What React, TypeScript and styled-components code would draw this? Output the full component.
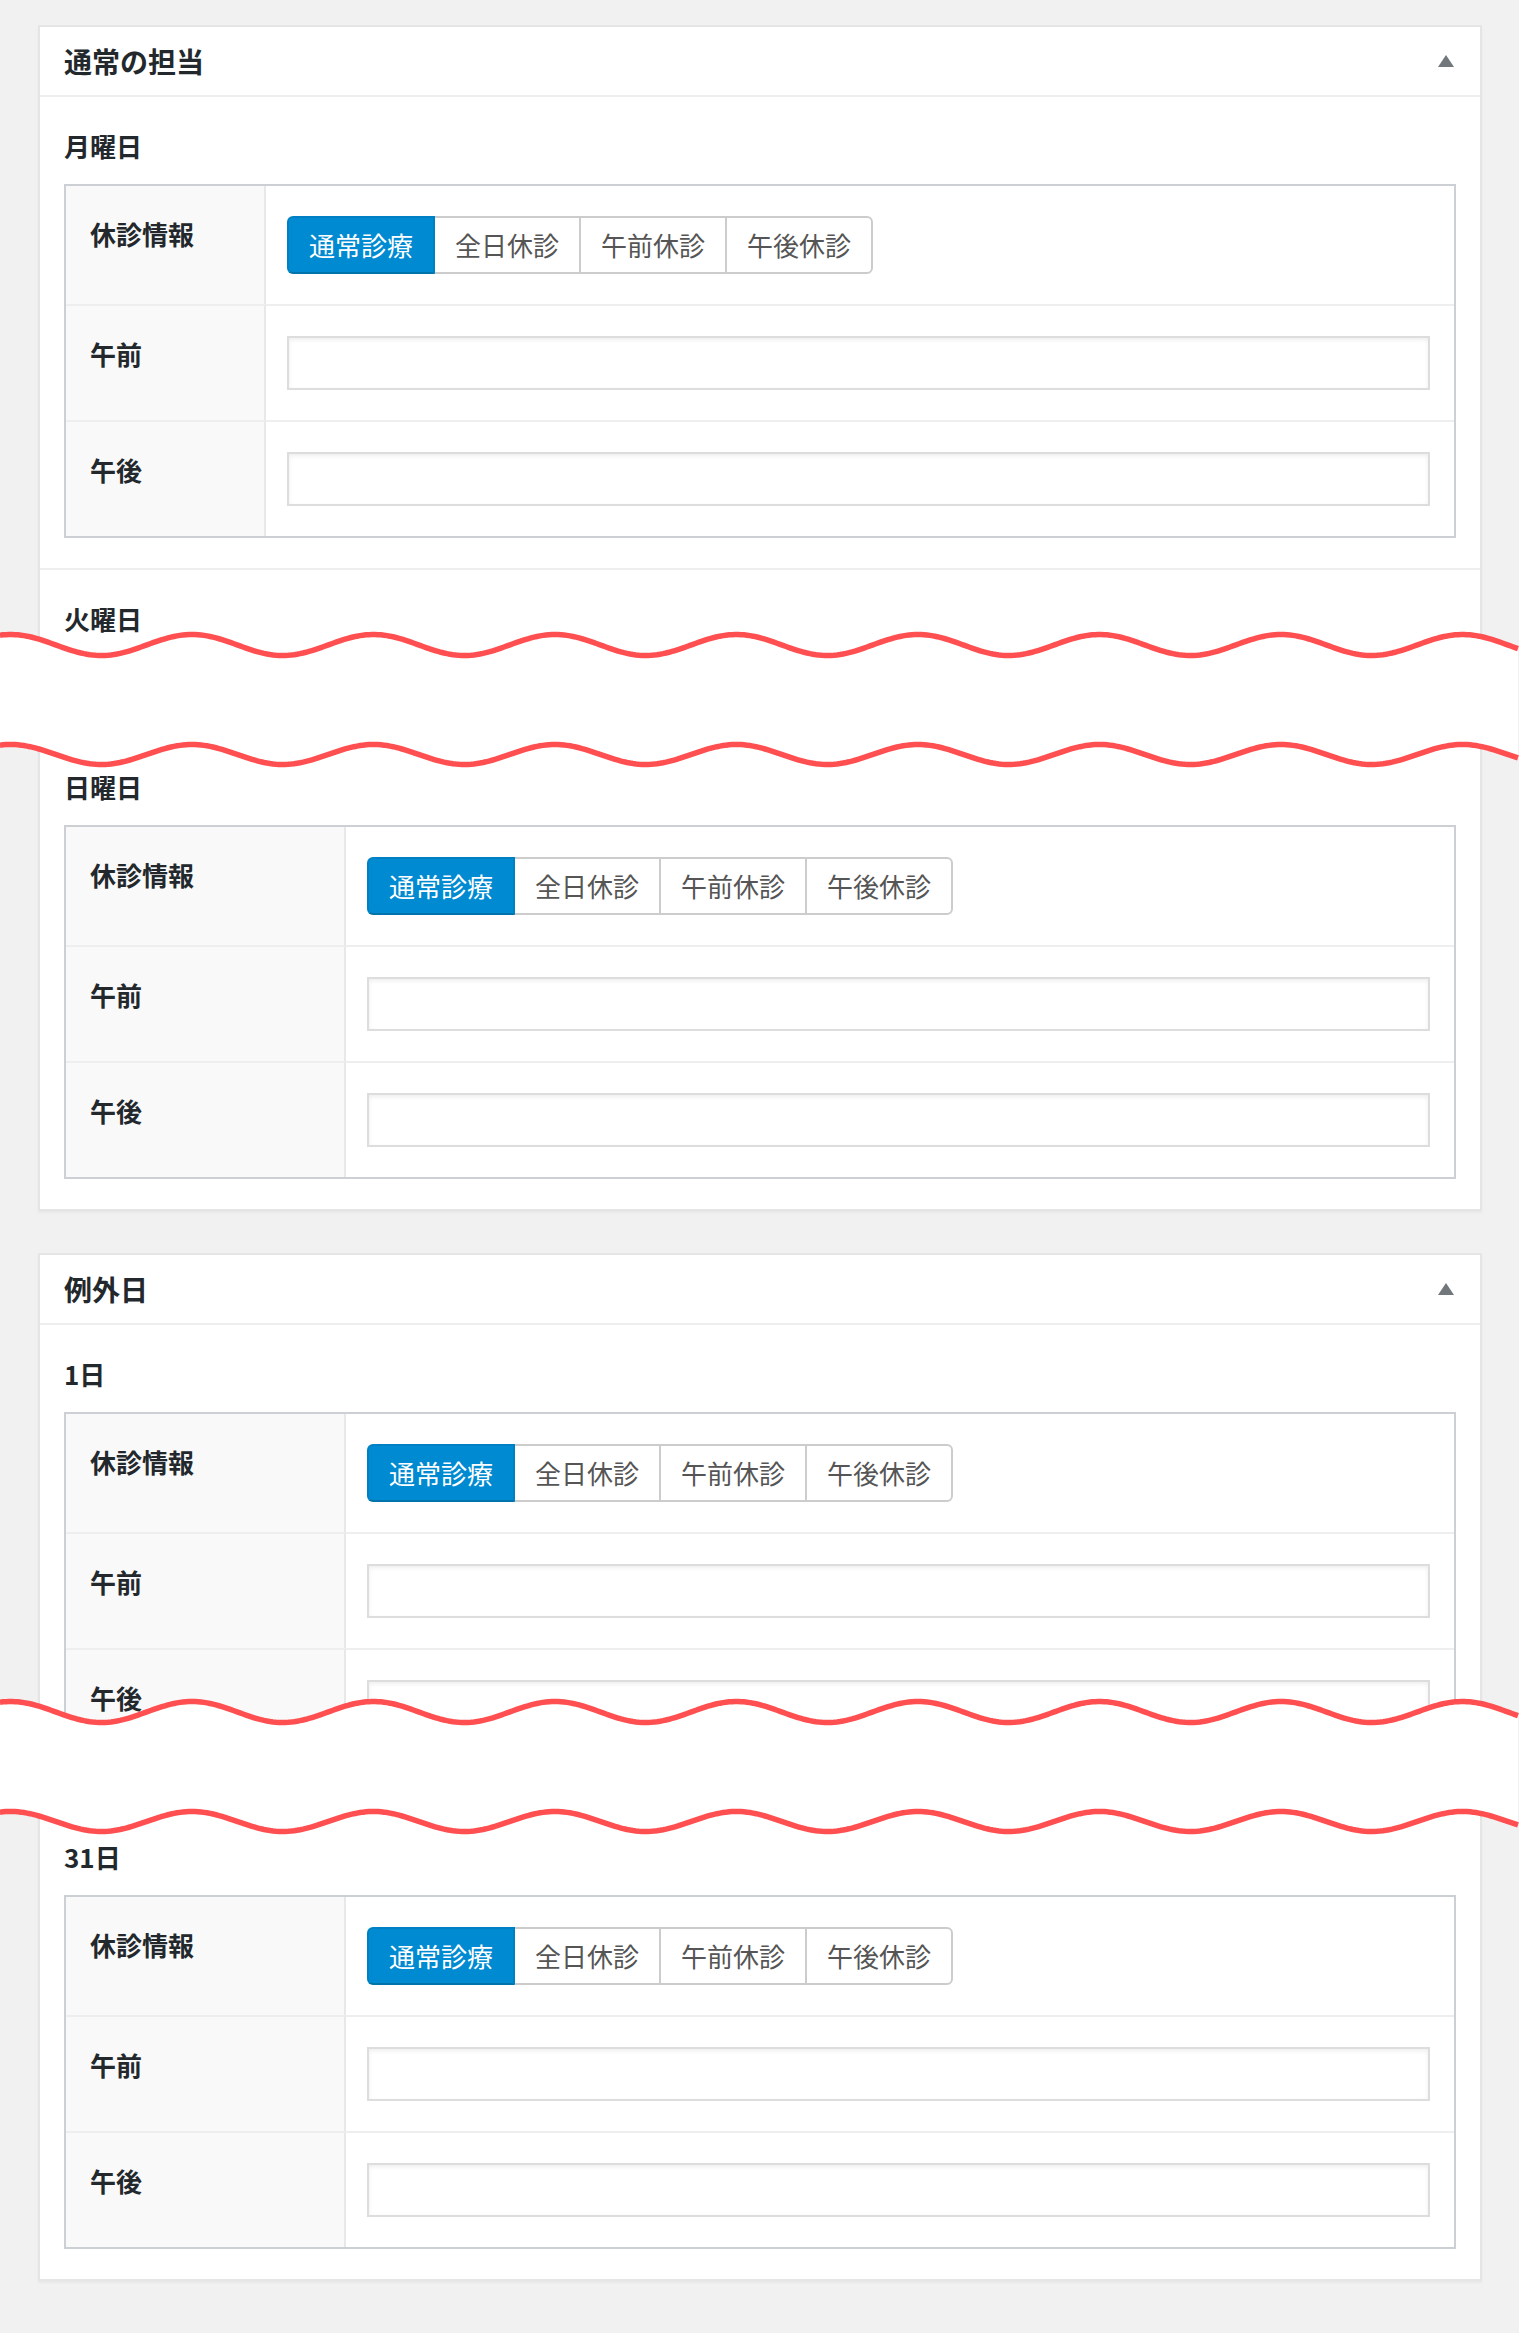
import React from 'react';
import styled, { createGlobalStyle } from 'styled-components';

const GlobalStyle = createGlobalStyle`
  html, body {
    margin: 0;
    padding: 0;
    background: #f1f1f1;
  }
  body {
    font-family: "Noto Sans CJK JP", "Noto Sans", sans-serif;
    color: #23282d;
  }
`;

const Page = styled.div`
  min-height: 2333px;
  box-sizing: border-box;
  padding: 25px 37px 53px 38px;
`;

type CardProps = { $height?: number; $overlap?: number };

const Card = styled.section<CardProps>`
  background: #fff;
  border: 2px solid #e5e5e5;
  box-shadow: 0 2px 2px rgba(0, 0, 0, 0.04);
  box-sizing: border-box;
  margin-bottom: 42px;

  ${(p) =>
    p.$height !== undefined &&
    `
    height: ${p.$height}px;
    overflow: hidden;
    border-bottom: none;
    margin-bottom: 0;
  `}

  ${(p) =>
    p.$overlap !== undefined &&
    `
    margin-top: -${p.$overlap}px;
    border-top: none;
  `}
`;

const Header = styled.div`
  display: flex;
  align-items: center;
  justify-content: space-between;
  padding: 16px 26px 16px 24px;
  border-bottom: 2px solid #eee;
`;

const Title = styled.h2`
  margin: 0;
  font-size: 28px;
  line-height: 36px;
  font-weight: 700;
  color: #23282d;
`;

const Toggle = styled.svg`
  display: block;
  width: 16px;
  height: 12px;
`;

const Section = styled.div<{ $divider?: boolean }>`
  padding: 31px 24px 30px;
  border-bottom: ${(p) => (p.$divider ? '2px solid #eee' : 'none')};
`;

const DayLabel = styled.h3`
  margin: 0 0 20px;
  font-size: 26px;
  line-height: 36px;
  font-weight: 700;
  color: #23282d;
`;

const Table = styled.div<{ $labelWidth: number }>`
  display: grid;
  grid-template-columns: ${(p) => p.$labelWidth}px 1fr;
  border: 2px solid #ccd0d4;
`;

const Th = styled.div<{ $first?: boolean }>`
  box-sizing: border-box;
  background: #f9f9f9;
  padding: 30px 24px;
  border-right: 2px solid #e8e8e8;
  border-top: ${(p) => (p.$first ? 'none' : '2px solid #eee')};
  font-size: 26px;
  line-height: 36px;
  font-weight: 700;
  color: #23282d;
`;

const Td = styled.div<{ $first?: boolean }>`
  padding: 30px 24px 30px 21px;
  border-top: ${(p) => (p.$first ? 'none' : '2px solid #eee')};
  min-width: 0;
`;

const Segments = styled.div`
  display: flex;
`;

const Segment = styled.button<{ $active?: boolean }>`
  box-sizing: border-box;
  height: 58px;
  padding: 0 20px;
  margin: 0 0 0 -2px;
  font-family: inherit;
  font-size: 26px;
  line-height: 54px;
  border: 2px solid ${(p) => (p.$active ? '#0080c4' : '#ccc')};
  border-bottom-color: ${(p) => (p.$active ? '#0073aa' : '#ccc')};
  background: ${(p) => (p.$active ? '#008ad1' : '#fff')};
  color: ${(p) => (p.$active ? '#fff' : '#555')};
  border-radius: 0;
  position: relative;
  z-index: ${(p) => (p.$active ? 1 : 0)};
  cursor: pointer;

  &:first-child {
    margin-left: 0;
    border-radius: 6px 0 0 6px;
  }
  &:last-child {
    border-radius: 0 6px 6px 0;
  }
`;

const Input = styled.input`
  display: block;
  box-sizing: border-box;
  width: 100%;
  height: 54px;
  margin: 0;
  border: 2px solid #ddd;
  background: #fff;
  box-shadow: inset 0 2px 4px rgba(0, 0, 0, 0.07);
  font-size: 26px;
  padding: 0 10px;
  outline: none;
`;

const CutSvg = styled.svg<{ $above: number; $below: number }>`
  display: block;
  position: relative;
  z-index: 2;
  width: 1519px;
  height: 150px;
  margin: -${(p) => p.$above}px 0 -${(p) => p.$below}px -38px;
`;

const WAVE_W = 1519;

function wave(center: number, amp: number) {
  const pts: string[] = [];
  for (let x = 0; x <= WAVE_W; x += 3) {
    const y = center - amp * Math.cos((2 * Math.PI * (x - 192)) / 181.5);
    pts.push(`${x},${y.toFixed(2)}`);
  }
  return pts;
}

function Cut({ above, below }: { above: number; below: number }) {
  const top = wave(20, 10.5);
  const bottom = wave(129.5, 10);
  const fill = `M${top.join(' L')} L${[...bottom].reverse().join(' L')} Z`;
  return (
    <CutSvg $above={above} $below={below} viewBox="0 0 1519 150">
      <path d={fill} fill="#fff" />
      <path d={`M${top.join(' L')}`} fill="none" stroke="#ff4f50" strokeWidth={5.5} />
      <path d={`M${bottom.join(' L')}`} fill="none" stroke="#ff4f50" strokeWidth={5.5} />
    </CutSvg>
  );
}

const OPTIONS = ['通常診療', '全日休診', '午前休診', '午後休診'];

function Schedule({ labelWidth }: { labelWidth: number }) {
  return (
    <Table $labelWidth={labelWidth}>
      <Th $first>休診情報</Th>
      <Td $first>
        <Segments>
          {OPTIONS.map((o, i) => (
            <Segment key={o} type="button" $active={i === 0}>
              {o}
            </Segment>
          ))}
        </Segments>
      </Td>
      <Th>午前</Th>
      <Td>
        <Input type="text" />
      </Td>
      <Th>午後</Th>
      <Td>
        <Input type="text" />
      </Td>
    </Table>
  );
}

function CardHeader({ title }: { title: string }) {
  return (
    <Header>
      <Title>{title}</Title>
      <Toggle viewBox="0 0 16 12">
        <polygon points="8,0 16,12 0,12" fill="#72777c" />
      </Toggle>
    </Header>
  );
}

export default function App() {
  return (
    <>
      <GlobalStyle />
      <Page>
        <Card $height={634}>
          <CardHeader title="通常の担当" />
          <Section $divider>
            <DayLabel>月曜日</DayLabel>
            <Schedule labelWidth={200} />
          </Section>
          <Section>
            <DayLabel>火曜日</DayLabel>
          </Section>
        </Card>
        <Cut above={34} below={37} />
        <Card $overlap={0}>
          <Section>
            <DayLabel>日曜日</DayLabel>
            <Schedule labelWidth={280} />
          </Section>
        </Card>

        <Card $height={472}>
          <CardHeader title="例外日" />
          <Section>
            <DayLabel>1日</DayLabel>
            <Schedule labelWidth={280} />
          </Section>
        </Card>
        <Cut above={33} below={34} />
        <Card $overlap={0}>
          <Section>
            <DayLabel>31日</DayLabel>
            <Schedule labelWidth={280} />
          </Section>
        </Card>
      </Page>
    </>
  );
}
